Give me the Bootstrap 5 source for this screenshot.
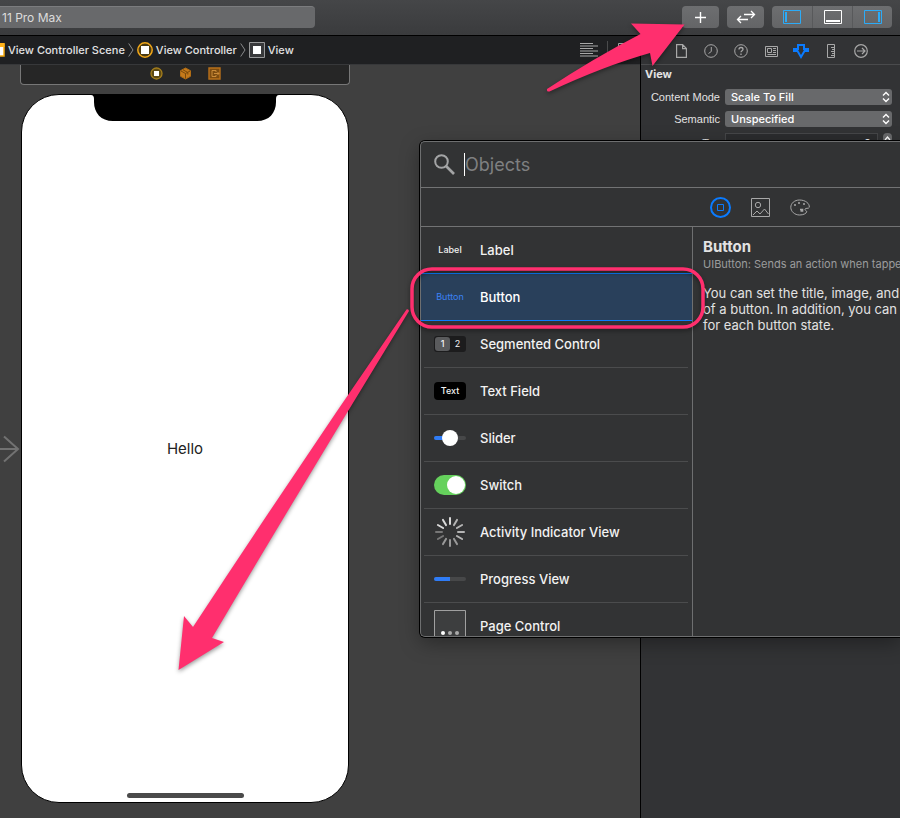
<!DOCTYPE html>
<html lang="en" data-bs-theme="dark">
<head>
<meta charset="utf-8">
<meta name="viewport" content="width=device-width, initial-scale=1">
<title>View Controller</title>
<link href="https://cdn.jsdelivr.net/npm/bootstrap@5.3.0/dist/css/bootstrap.min.css" rel="stylesheet">
<style>
  body { font-family: Inter, "Liberation Sans", sans-serif; font-size: 11px; line-height: 16px; color: #e2e2e2; background: #404040; }
  svg { display: block; flex: none; }
  .toolbar { height: 36px; background: linear-gradient(#454648, #3a3b3d); border-bottom: 1px solid #000; padding: 6px 8px 7px 0; }
  .tool-field { width: 35vw; height: 22px; line-height: 21px; padding-left: 2px; background: #68696b; border-top: 1px solid #7b7c7e; border-radius: 0 4px 4px 0; color: #dcdcdc; font-size: 12px; }
  .tool-btn { width: 37px; height: 22px; padding: 0; border: 0; border-radius: 4px; background: linear-gradient(#6d6e70, #646567); color: #fff; display: flex; align-items: center; justify-content: center; }
  .tool-btn:hover { background: #77787a; }
  .btn-group .tool-btn { width: 40px; }
  .btn-group .tool-btn + .tool-btn { border-left: 1px solid #58595b; border-top-left-radius: 0; border-bottom-left-radius: 0; }
  .btn-group .tool-btn:not(:last-child) { border-top-right-radius: 0; border-bottom-right-radius: 0; }
  .jump-bar { height: 29px; gap: 3px; background: #1f2022; border-bottom: 1px solid #37383a; font-weight: 500; }
  .jump-bar a { color: #e2e2e2; text-decoration: none; white-space: nowrap; }
  .canvas-area { background: #404040; padding: 0 20px; }
  .artboard { width: 330px; }
  .dock { height: 20px; background: #262626; border: 1px solid #777; border-top: 0; border-radius: 0 0 4px 4px; gap: 16px; padding-bottom: 2px; }
  .phone { margin: 9px 1px 0; aspect-ratio: 328 / 709; display: grid; grid-template-rows: 1fr auto 1fr; justify-items: center; background: #fff; border: 1px solid #000; border-radius: 38px; color: #222; font-size: 15px; }
  .home-bar { align-self: end; width: 117px; height: 5px; border-radius: 3px; background: #4a4a4a; margin-bottom: 4px; }
  .entry { left: 0; top: 435px; }
  .inspector { width: 260px; background: #323335; border-left: 1px solid #000; }
  .inspector-tabs { height: 29px; border-bottom: 1px solid #4a4b4d; padding: 2px 29px 0 30px; }
  .icon-btn { padding: 0; border: 0; background: none; color: #a8a8a8; width: 20px; display: flex; justify-content: center; }
  .icon-btn.on { color: #0a7bff; }
  .attrs { padding: 1px 8px 0 4px; }
  .attrs-title { font-weight: 700; margin-bottom: 7px; }
  .attr { height: 16px; margin-bottom: 6px; gap: 5px; }
  .attr label { width: 75px; text-align: right; white-space: nowrap; font-family: "Liberation Sans", Arial, sans-serif; }
  .attr select { height: 16px; padding: 0 6px; border: 0; border-radius: 3px; appearance: none; color: #fff; line-height: 16px; font-weight: 500;
    background: #68696b url("data:image/svg+xml,%3Csvg xmlns='http://www.w3.org/2000/svg' width='8' height='12' fill='none' stroke='white' stroke-width='1.4'%3E%3Cpath d='M1 4.5 4 1.5 7 4.5M1 7.5 4 10.5 7 7.5'/%3E%3C/svg%3E") no-repeat right 2px center; }
  .attr-tag { height: 20px; }
  .attr-tag input { height: 20px; padding: 0 6px; border: 1px solid #454648; background: #2b2c2e; color: #eee; text-align: right; }
  .stepper { width: 9px; height: 20px; padding: 0; border: 0; border-radius: 4px; background: #68696b; color: #fff; }
  .library { left: 420px; right: 0; top: 141px; height: 496px; background: #323334; border: 1px solid #6e6f70; border-right: 0; border-radius: 5px 0 0 5px; box-shadow: 0 0 0 1px #000, 0 6px 20px rgba(0,0,0,.35); z-index: 2; }
  .search-row { height: 46px; padding-left: 13px; gap: 9px; border-bottom: 1px solid #727374; }
  .search-row input { height: 23px; padding: 0; border: 0; border-left: 1px solid #fff; background: none; color: #fff; font-size: 18px; outline: 0; }
  .search-row input::placeholder { color: #7f8081; opacity: 1; }
  .lib-tabs { height: 39px; border-bottom: 1px solid #727374; gap: 20px; padding-left: 289px; }
  .lib-list { width: 272px; border-right: 1px solid #6e6f70; font-size: 13px; font-weight: 500; color: #f2f2f2; }
  .lib-item { height: 47px; flex: none; display: flex; align-items: center; margin: 0 4px 0 3px; padding: 0 10px; gap: 14px; border-bottom: 1px solid #4b4c4d; color: inherit; text-decoration: none; white-space: nowrap; }
  .lib-item.chosen { height: 48px; margin: -1px 0 0; padding: 0 13px; background: #29405b; border-top: 1px solid #0a7bff; border-bottom: 1px solid #0a7bff; color: #fff; }
  .thumb { width: 32px; flex: none; font-size: 9px; display: flex; justify-content: center; align-items: center; }
  .thumb.blue { color: #3b82f6; font-weight: 400; }
  .seg { height: 16px; background: #1c1c1d; border-radius: 3px; padding: 1px; font-weight: 400; }
  .seg span { flex: 1; height: 14px; line-height: 14px; text-align: center; border-radius: 3px; }
  .seg .lit { background: #5a5b5d; font-weight: 500; }
  .field-thumb { height: 18px; background: #000; border-radius: 4px; }
  .lib-detail { padding: 10px 0 0 10px; white-space: nowrap; font-size: 13px; }
  .lib-detail h1 { font-size: 15px; line-height: 19px; font-weight: 700; margin: 0; color: #e2e2e2; }
  .lib-detail .sub { line-height: 16px; color: #9b9c9d; font-size: 11px; margin-bottom: 13px; }
  .notes { left: 0; top: 0; z-index: 3; pointer-events: none; }
</style>
<script src="https://cdn.jsdelivr.net/npm/bootstrap@5.3.0/dist/js/bootstrap.bundle.min.js"></script>
</head>
<body>
<div class="position-relative vh-100 d-flex flex-column overflow-hidden">
  <header class="toolbar d-flex align-items-center gap-2">
    <div class="tool-field me-auto">11 Pro Max</div>
    <button class="tool-btn" aria-label="Library"><svg width="13" height="13" stroke="currentColor" stroke-width="1.4"><path d="M6.500 1v11M1 6.500h11"/></svg></button>
    <button class="tool-btn" aria-label="Code review"><svg width="20" height="14" fill="none" stroke="currentColor" stroke-width="1.3"><path d="M8 4.500h10.500M15 1l3.500 3.500L15 8M12 9.500H1.500M5 6 1.500 9.500 5 13"/></svg></button>
    <div class="btn-group">
      <button class="tool-btn" aria-label="Navigator"><svg width="18" height="14" fill="none" stroke="#2cabf7"><path d="M.5.5h17v13H.5z"/><path d="M3 2v10" stroke-width="2"/></svg></button>
      <button class="tool-btn" aria-label="Debug area"><svg width="18" height="14" fill="none" stroke="#fff"><path d="M.5.5h17v13H.5z"/><path d="M2 11h14" stroke-width="2"/></svg></button>
      <button class="tool-btn" aria-label="Inspectors"><svg width="18" height="14" fill="none" stroke="#2cabf7"><path d="M.5.5h17v13H.5z"/><path d="M15 2v10" stroke-width="2"/></svg></button>
    </div>
  </header>

  <div class="d-flex flex-grow-1">
    <main class="flex-grow-1 d-flex flex-column">
      <nav class="jump-bar d-flex align-items-center">
        <svg width="5" height="16" fill="none"><path d="M0 2h4v12H0" fill="#fff" stroke="#f5a80c" stroke-width="1.500"/><path d="M0 1h4.500v4H0z" fill="#ffb31a"/></svg>
        <a href="#scene">View Controller Scene</a>
        <svg width="6" height="14" fill="none" stroke="#8a8b8c"><path d="M.7.5 5 7 .7 13.500"/></svg>
        <svg width="16" height="16"><circle cx="8" cy="8" r="7.200" fill="#4a3a12" stroke="#f0a71a" stroke-width="1.500"/><path d="M4 4h8v8H4z" fill="#fff"/></svg>
        <a href="#controller">View Controller</a>
        <svg width="6" height="14" fill="none" stroke="#8a8b8c"><path d="M.7.5 5 7 .7 13.500"/></svg>
        <svg width="16" height="16"><path d="M.5.5h15v15H.5z" fill="#38393b" stroke="#98999a"/><path d="M4 4h8v8H4z" fill="#fff"/></svg>
        <a href="#view">View</a>
        <div class="d-flex align-items-center gap-2 ms-auto pe-1">
          <button class="icon-btn" aria-label="Editor options"><svg width="18" height="14" stroke="currentColor"><path d="M0 .5h13M0 3h18M0 5.500h13M0 8h18M0 10.500h13M0 13h18"/></svg></button>
          <svg width="1" height="18"><path d="M0 0h1v18H0z" fill="#4a4b4c"/></svg>
          <button class="icon-btn" aria-label="Add editor"><svg width="16" height="14" fill="none" stroke="currentColor"><path d="M.5.5h15v13H.5zM6.500.5v13"/></svg></button>
        </div>
      </nav>
      <section class="canvas-area flex-grow-1">
        <div class="artboard">
          <div class="dock d-flex justify-content-center align-items-center">
            <svg width="13" height="13"><circle cx="6.500" cy="6.500" r="5.500" fill="#5d4a14" stroke="#a57e1c" stroke-width="1.300"/><path d="M4 4h5v5H4z" fill="#fff"/></svg>
            <svg width="13" height="13" fill="none" stroke="#7a4a0c"><path d="M6.500 1 11.500 3.700v5.600L6.500 12l-5-2.700V3.700z" fill="#c47a1b" stroke="#b06c14"/><path d="m2 4 4.500 2.500L11 4M6.500 6.500v5M4 2.800l4.800 2.700v2"/></svg>
            <svg width="13" height="13" fill="none"><path d="M1 1h11v11H1z" fill="#7d4c10" stroke="#b8701a" stroke-width="1.400"/><path d="M8 5V3.500H4v6h4V8M6 6.500h5M9.500 5 11 6.500 9.500 8" stroke="#c98b3a"/></svg>
          </div>
          <div class="phone">
            <svg width="188" height="26"><path d="M0 0h188q-3 0-3 4v3c0 11-7 19-19 19H22C10 26 3 18 3 7V4q0-4-3-4z"/></svg>
            <span>Hello</span>
            <div class="home-bar"></div>
          </div>
        </div>
      </section>
    </main>

    <aside class="inspector flex-shrink-0">
      <nav class="inspector-tabs d-flex justify-content-between align-items-center">
        <button class="icon-btn" aria-label="File"><svg width="11" height="14" fill="none" stroke="currentColor" stroke-width="1.200"><path d="M.6.6h6l3.800 4v8.800H.6zM6.600.6v4h3.800"/></svg></button>
        <button class="icon-btn" aria-label="History"><svg width="14" height="14" fill="none" stroke="currentColor"><circle cx="7" cy="7" r="6.300"/><path d="M7.300 3v4.500L4.500 9.500"/></svg></button>
        <button class="icon-btn" aria-label="Help"><svg width="14" height="14" fill="none" stroke="currentColor"><circle cx="7" cy="7" r="6.300"/><path d="M5 5.500C5 4.200 5.900 3.500 7 3.500s2 .7 2 1.800C9 6.700 7 6.700 7 8.300M7 9.500V11" stroke-width="1.300"/></svg></button>
        <button class="icon-btn" aria-label="Identity"><svg width="13" height="11" fill="none" stroke="currentColor"><path d="M.5.5h12v10H.5zM2.500 2.500h4v4h-4zM8 2.500h3M8 4.500h3M8 6.500h3M2.500 8.500H11"/></svg></button>
        <button class="icon-btn on" aria-label="Attributes"><svg width="16" height="15" fill="none" stroke="currentColor" stroke-width="2"><path d="M5 1h6v4h4v2h-3.500L8 13 4.500 7H1V5h4z"/></svg></button>
        <button class="icon-btn" aria-label="Size"><svg width="8" height="14" fill="none" stroke="currentColor"><path d="M.5.5h7v13h-7zM7 3.500H4M7 5.500H5M7 7.500H4M7 9.500H5M7 11.500H4"/></svg></button>
        <button class="icon-btn" aria-label="Connections"><svg width="14" height="14" fill="none" stroke="currentColor" stroke-width="1.200"><circle cx="7" cy="7" r="6.300"/><path d="M3 7h8M8 4l3 3-3 3"/></svg></button>
      </nav>
      <form class="attrs">
        <div class="attrs-title">View</div>
        <div class="attr d-flex align-items-center"><label for="mode">Content Mode</label><select id="mode" class="flex-grow-1"><option>Scale To Fill</option></select></div>
        <div class="attr d-flex align-items-center"><label for="semantic">Semantic</label><select id="semantic" class="flex-grow-1"><option>Unspecified</option></select></div>
        <div class="attr attr-tag d-flex align-items-center"><label for="tag">Tag</label><input id="tag" class="flex-grow-1 w-50" value="0"><button type="button" class="stepper" aria-label="Step"><svg width="9" height="20" fill="none" stroke="currentColor" stroke-width="1.300"><path d="m2 7 2.500-3L7 7M2 13l2.500 3L7 13"/></svg></button></div>
      </form>
    </aside>
  </div>

  <svg class="entry position-absolute" width="20" height="28" fill="none" stroke="#727272" stroke-width="2"><path d="M0 14h18M4 1.500 18 14 4 26.500"/></svg>

  <section class="library position-absolute d-flex flex-column overflow-hidden">
    <div class="search-row d-flex align-items-center flex-shrink-0">
      <svg width="21" height="21" fill="none" stroke="#a3a4a5" stroke-width="2"><circle cx="7.500" cy="7.500" r="6.300"/><path d="m12 12 8 8" stroke-width="2.600"/></svg>
      <input type="text" class="flex-grow-1" placeholder="Objects" aria-label="Search objects">
    </div>
    <div class="lib-tabs d-flex align-items-center flex-shrink-0">
      <button class="icon-btn on" aria-label="Objects"><svg width="21" height="21" fill="none" stroke="currentColor"><circle cx="10.500" cy="10.500" r="9.500" stroke-width="2"/><path d="M7.500 7.500h6v6h-6z"/></svg></button>
      <button class="icon-btn" aria-label="Media"><svg width="19" height="19" fill="none" stroke="currentColor"><path d="M.5.5h18v18H.5z"/><circle cx="7" cy="7" r="2.700"/><path d="m2 17 4-4 3 3 4.500-5 4 5"/></svg></button>
      <button class="icon-btn" aria-label="Colors"><svg width="20" height="17" fill="none" stroke="currentColor"><path d="M9.500 1C4.500 1 .8 4.300.8 8.300c0 4.200 3.900 7.700 8.700 7.700 4 0 6.800-1.500 7.200-3.200.2-1.200-1.700-1-1.700-2.500 0-1.800 3.800-.1 4.300-2C19.700 4.500 15.500 1 9.500 1z"/><path d="M4 6h2M8 4h2M13 5h2M10 10.500h2.500v1.500H10.500" stroke-width="1.600"/></svg></button>
    </div>
    <div class="d-flex flex-grow-1 overflow-hidden">
      <nav class="lib-list d-flex flex-column flex-shrink-0 overflow-hidden">
        <a class="lib-item" href="#label"><span class="thumb">Label</span>Label</a>
        <a class="lib-item chosen" href="#button"><span class="thumb blue">Button</span>Button</a>
        <a class="lib-item" href="#segmented"><span class="thumb seg"><span class="lit">1</span><span>2</span></span>Segmented Control</a>
        <a class="lib-item" href="#textfield"><span class="thumb field-thumb">Text</span>Text Field</a>
        <a class="lib-item" href="#slider"><svg width="32" height="16"><rect y="6" width="32" height="4" rx="2" fill="#474849"/><rect y="6" width="16" height="4" rx="2" fill="#2f7cf6"/><circle cx="16" cy="8" r="8" fill="#fff"/></svg>Slider</a>
        <a class="lib-item" href="#switch"><svg width="32" height="20"><rect width="32" height="20" rx="10" fill="#65d15c"/><circle cx="22" cy="10" r="9" fill="#fff"/></svg>Switch</a>
        <a class="lib-item" href="#activity"><svg width="32" height="32" viewBox="-16 -16 32 32" stroke-width="2" stroke-linecap="round"><g stroke="#dadada"><path d="M0-14v6M-7-12.100l3 5.200M-12.100-7l5.200 3"/></g><g stroke="#b4b4b4"><path d="M7-12.100 4-6.900M12.100-7 6.900-4M14 0H8M12.100 7 6.900 4"/></g><g stroke="#999"><path d="M7 12.100 4 6.900M0 14V8M-7 12.100l3-5.200"/></g><g stroke="#777"><path d="m-12.100 7 5.200-3M-14 0h6"/></g></svg>Activity Indicator View</a>
        <a class="lib-item" href="#progress"><svg width="32" height="4"><rect width="32" height="4" rx="2" fill="#474849"/><path d="M2 0h14v4H2a2 2 0 0 1 0-4z" fill="#2f7cf6"/></svg>Progress View</a>
        <a class="lib-item" href="#page"><svg width="32" height="32"><path d="M.5.5h31v31H.5z" fill="#3d3e3f" stroke="#a0a0a0"/><circle cx="9" cy="23" r="2" fill="#fff"/><circle cx="16" cy="23" r="2" fill="#aaa"/><circle cx="23" cy="23" r="2" fill="#aaa"/></svg>Page Control</a>
      </nav>
      <article class="lib-detail">
        <h1>Button</h1>
        <p class="sub">UIButton: Sends an action when tapped.</p>
        <p>You can set the title, image, and<br>of a button. In addition, you can set<br>for each button state.</p>
      </article>
    </div>
  </section>

  <svg class="notes position-absolute" width="900" height="818" fill="#ff2f6e">
    <g filter="drop-shadow(0 2px 2px rgba(0,0,0,.4))">
      <path d="M547 89Q594 58 640.500 34L631 23.500 684.500 24.500 652.500 66 650 53Q604 66 549.500 91.500 546.500 92 547 89z"/>
      <path d="M406.500 309.500Q298 467 193 627L184 616 178.500 670 224 642 212 638Q308 476 409 311 408.500 308.500 406.500 309.500z"/>
      <rect x="412" y="269" width="291" height="58" rx="20" fill="none" stroke="#ff2f6e" stroke-width="3.500"/>
    </g>
  </svg>
</div>
</body>
</html>
